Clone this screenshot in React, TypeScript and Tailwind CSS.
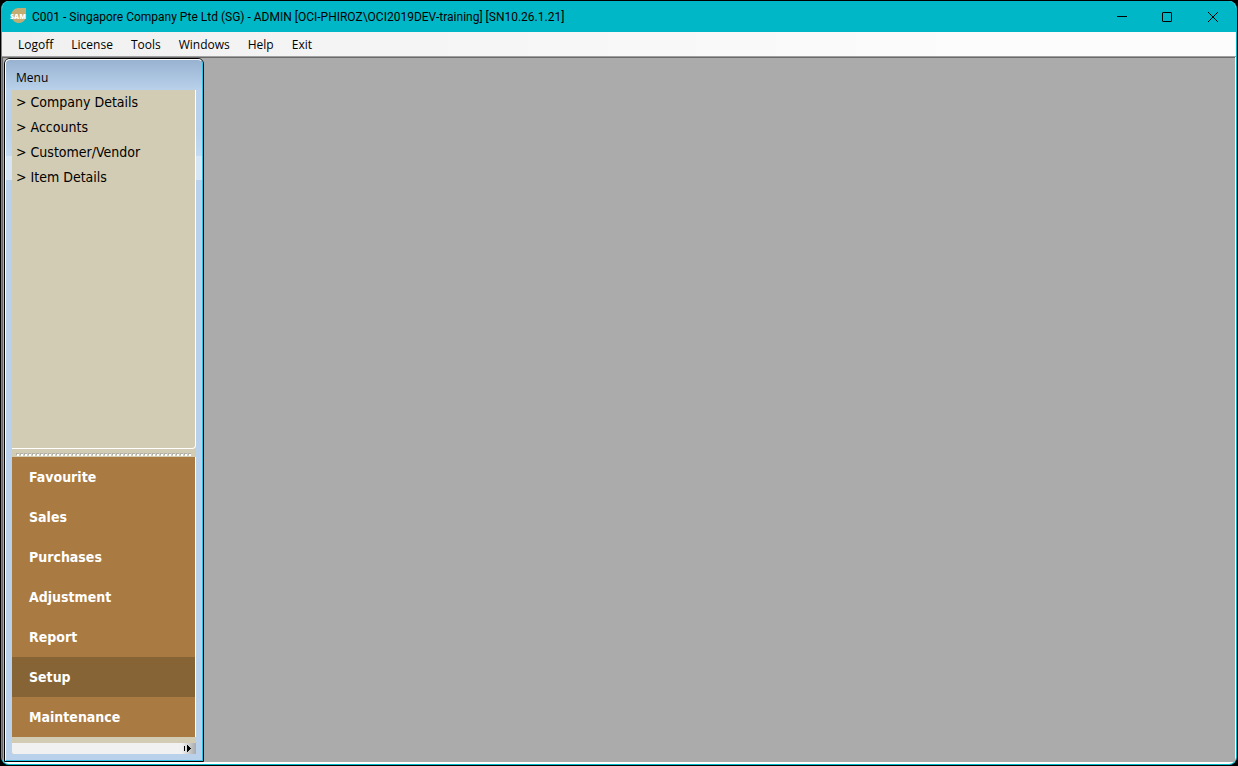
import { useState } from 'react'

const menus = ['Logoff', 'License', 'Tools', 'Windows', 'Help', 'Exit']

const modules = [
  'Favourite',
  'Sales',
  'Purchases',
  'Adjustment',
  'Report',
  'Setup',
  'Maintenance',
]

const links = ['Company Details', 'Accounts', 'Customer/Vendor', 'Item Details']

function Logo() {
  return (
    <svg width="18" height="18" viewBox="0 0 18 18" aria-hidden="true">
      <path d="M9 0H16V9A7.5 7.5 0 1 1 9 0Z" fill="#c3ad72" />
      <text
        x="8"
        y="11"
        textAnchor="middle"
        fill="#fff"
        fontFamily="Open Sans, sans-serif"
        fontSize="7"
        fontWeight="800"
      >
        SAM
      </text>
    </svg>
  )
}

function TitleBar() {
  return (
    <header className="flex h-[31px] flex-none items-center bg-[#00b7c7] pl-2">
      <Logo />
      <h1 className="flex-auto truncate pl-1 font-[Roboto,sans-serif] text-[12px]">
        C001 - Singapore Company Pte Ltd (SG) - ADMIN
        [OCI-PHIROZ\OCI2019DEV-training] [SN10.26.1.21]
      </h1>
      <div className="flex h-full">
        <button
          aria-label="Minimize"
          className="flex w-[45px] items-center justify-center"
        >
          <svg width="10" height="10" shapeRendering="crispEdges">
            <path d="M0 4.5H10" stroke="#000" />
          </svg>
        </button>
        <button
          aria-label="Maximize"
          className="flex w-[45px] items-center justify-center"
        >
          <svg width="10" height="10" fill="none">
            <rect x=".5" y=".5" width="9" height="9" rx=".5" stroke="#000" />
          </svg>
        </button>
        <button
          aria-label="Close"
          className="flex w-[47px] items-center justify-center"
        >
          <svg width="10" height="10">
            <path d="M0 0L10 10M10 0L0 10" stroke="#000" />
          </svg>
        </button>
      </div>
    </header>
  )
}

function MenuBar() {
  return (
    <nav className="flex h-[25px] flex-none items-center gap-[18px] border-b border-[#a0a0a0] bg-linear-to-r from-[#f0f0f0] to-[#fcfcfc] to-80% pt-[2px] pl-4 font-['Open_Sans',sans-serif] text-[12px]">
      {menus.map((m) => (
        <button key={m}>{m}</button>
      ))}
    </nav>
  )
}

function Grip() {
  return (
    <div className="flex h-[8px] flex-none items-end px-1 pb-px">
      <svg width="100%" height="3" shapeRendering="crispEdges">
        <defs>
          <pattern id="grip" width="4" height="3" patternUnits="userSpaceOnUse">
            <path d="M0 0H3V2H0Z" fill="#b0b0a4" />
            <path d="M1 1H3V3H1Z" fill="#fff" />
          </pattern>
        </defs>
        <rect width="100%" height="3" fill="url(#grip)" />
      </svg>
    </div>
  )
}

function Sidebar() {
  const [active, setActive] = useState('Setup')

  return (
    <aside className="flex w-[200px] flex-none flex-col rounded-t-md border border-black bg-[#b9d1ea]">
      <div className="flex flex-auto flex-col rounded-t-[5px] border border-t-white border-r-[#2bc4e6] border-b-[#2bc4e6] border-l-white bg-[linear-gradient(#98b2d1,#b9d1ea_30px,#b9d1ea_72px,#c3daf3_96px,#d6e6f4_96px,#d6e6f4_120px,#b9d1ea_120px)] px-[6px] pb-[6px]">
        <h2 className="h-[30px] flex-none pt-[10px] pl-1 font-['Open_Sans',sans-serif] text-[12px] leading-[16px]">
          Menu
        </h2>
        <div className="flex flex-auto flex-col bg-[#d2ccb4] font-['DejaVu_Sans_Condensed','DejaVu_Sans',sans-serif] text-[14px]">
          <ul className="flex-auto rounded-br-sm border-r border-b border-white pl-1 leading-[25px]">
            {links.map((l) => (
              <li key={l}>
                <a href="#">&gt; {l}</a>
              </li>
            ))}
          </ul>
          <Grip />
          <div className="flex flex-col border-r border-white">
            {modules.map((m) => (
              <button
                key={m}
                onClick={() => setActive(m)}
                className={`h-[40px] pl-[17px] text-left font-bold text-white ${
                  m === active ? 'bg-[#866436]' : 'bg-[#a97a41]'
                }`}
              >
                {m}
              </button>
            ))}
          </div>
          <div className="mt-[6px] flex h-[11px] flex-none rounded-b-xs bg-[#f1f1f1]">
            <button
              aria-label="Configure buttons"
              className="ml-auto flex w-[14px] items-center bg-linear-to-r from-[#f1f1f1] to-[#a9abac] pl-[2px]"
            >
              <svg width="7" height="7" shapeRendering="crispEdges">
                <path d="M0 1H1V6H0ZM3 0H4V1H5V2H6V3H7V4H6V5H5V6H4V7H3Z" />
              </svg>
            </button>
          </div>
        </div>
      </div>
    </aside>
  )
}

export default function App() {
  return (
    <div className="h-screen bg-black p-px text-black">
      <div className="flex h-full flex-col overflow-hidden rounded-lg border-x border-b border-[#00b7c7] bg-white">
        <TitleBar />
        <MenuBar />
        <div className="mr-px mb-[2px] flex min-h-0 flex-auto border-t border-l border-[#696969] bg-[#ababab] pl-px">
          <Sidebar />
          <main className="flex-auto" />
        </div>
      </div>
    </div>
  )
}
